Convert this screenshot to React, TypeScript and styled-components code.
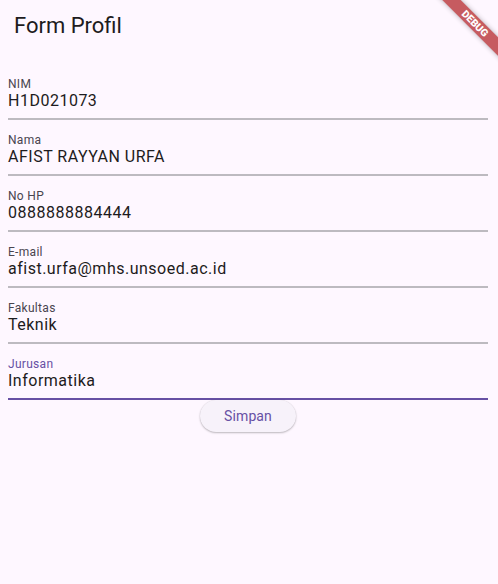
import React from "react";
import styled, { createGlobalStyle } from "styled-components";

const Global = createGlobalStyle`
  html, body { margin: 0; padding: 0; background: #fef7ff; }
  body { font-family: Roboto, "Noto Sans", sans-serif; color: #1d1b20; }
  * { box-sizing: border-box; }
`;

const Page = styled.div`
  position: relative;
  width: 498px;
  height: 584px;
  overflow: hidden;
  background: #fef7ff;
`;

const AppBar = styled.header`
  height: 56px;
  padding: 12px 0 0 14px;
`;

const Title = styled.h1`
  margin: 0;
  font-size: 22px;
  font-weight: 400;
  line-height: 28px;
  color: #1d1b20;
`;

const Form = styled.form`
  display: flex;
  flex-direction: column;
  align-items: stretch;
  padding: 8px 10px 0 8px;
`;

const Field = styled.div<{ $focused?: boolean }>`
  display: flex;
  flex-direction: column;
  height: 56px;
  padding-top: 14px;
  border-bottom: 2px solid ${(p) => (p.$focused ? "#6750a4" : "#bdbac0")};
`;

const Label = styled.label<{ $focused?: boolean }>`
  font-size: 12px;
  line-height: 12px;
  letter-spacing: 0.3px;
  color: ${(p) => (p.$focused ? "#6750a4" : "#49454f")};
`;

const Value = styled.div`
  margin-top: 1.5px;
  font-size: 16px;
  line-height: 18px;
  letter-spacing: 0.5px;
  color: #1d1b20;
`;

const ButtonRow = styled.div`
  display: flex;
  justify-content: center;
`;

const Button = styled.button`
  width: 96px;
  height: 32px;
  border: none;
  border-radius: 16px;
  background: #f7f2fa;
  color: #6750a4;
  font-family: Roboto, sans-serif;
  font-size: 14px;
  font-weight: 400;
  letter-spacing: 0.1px;
  box-shadow: 0 1px 2px rgba(0, 0, 0, 0.25), 0 0 1px rgba(0, 0, 0, 0.12);
  padding: 0;
`;

const Ribbon = styled.div`
  position: absolute;
  left: 425px;
  top: 17px;
  width: 100px;
  height: 13px;
  transform: rotate(45deg);
  background: rgba(176, 30, 34, 0.72);
  color: #fff;
  font-family: Roboto, sans-serif;
  font-weight: 900;
  font-size: 10.2px;
  line-height: 13px;
  text-align: center;
  box-shadow: 0 0 5px rgba(0, 0, 0, 0.3);
`;

const fields = [
  { label: "NIM", value: "H1D021073" },
  { label: "Nama", value: "AFIST RAYYAN URFA" },
  { label: "No HP", value: "0888888884444" },
  { label: "E-mail", value: "afist.urfa@mhs.unsoed.ac.id" },
  { label: "Fakultas", value: "Teknik" },
  { label: "Jurusan", value: "Informatika", focused: true },
];

export default function App() {
  return (
    <Page>
      <Global />
      <AppBar>
        <Title>Form Profil</Title>
      </AppBar>
      <Form onSubmit={(e) => e.preventDefault()}>
        {fields.map((f) => (
          <Field key={f.label} $focused={f.focused}>
            <Label $focused={f.focused}>{f.label}</Label>
            <Value>{f.value}</Value>
          </Field>
        ))}
        <ButtonRow>
          <Button type="submit">Simpan</Button>
        </ButtonRow>
      </Form>
      <Ribbon>DEBUG</Ribbon>
    </Page>
  );
}
